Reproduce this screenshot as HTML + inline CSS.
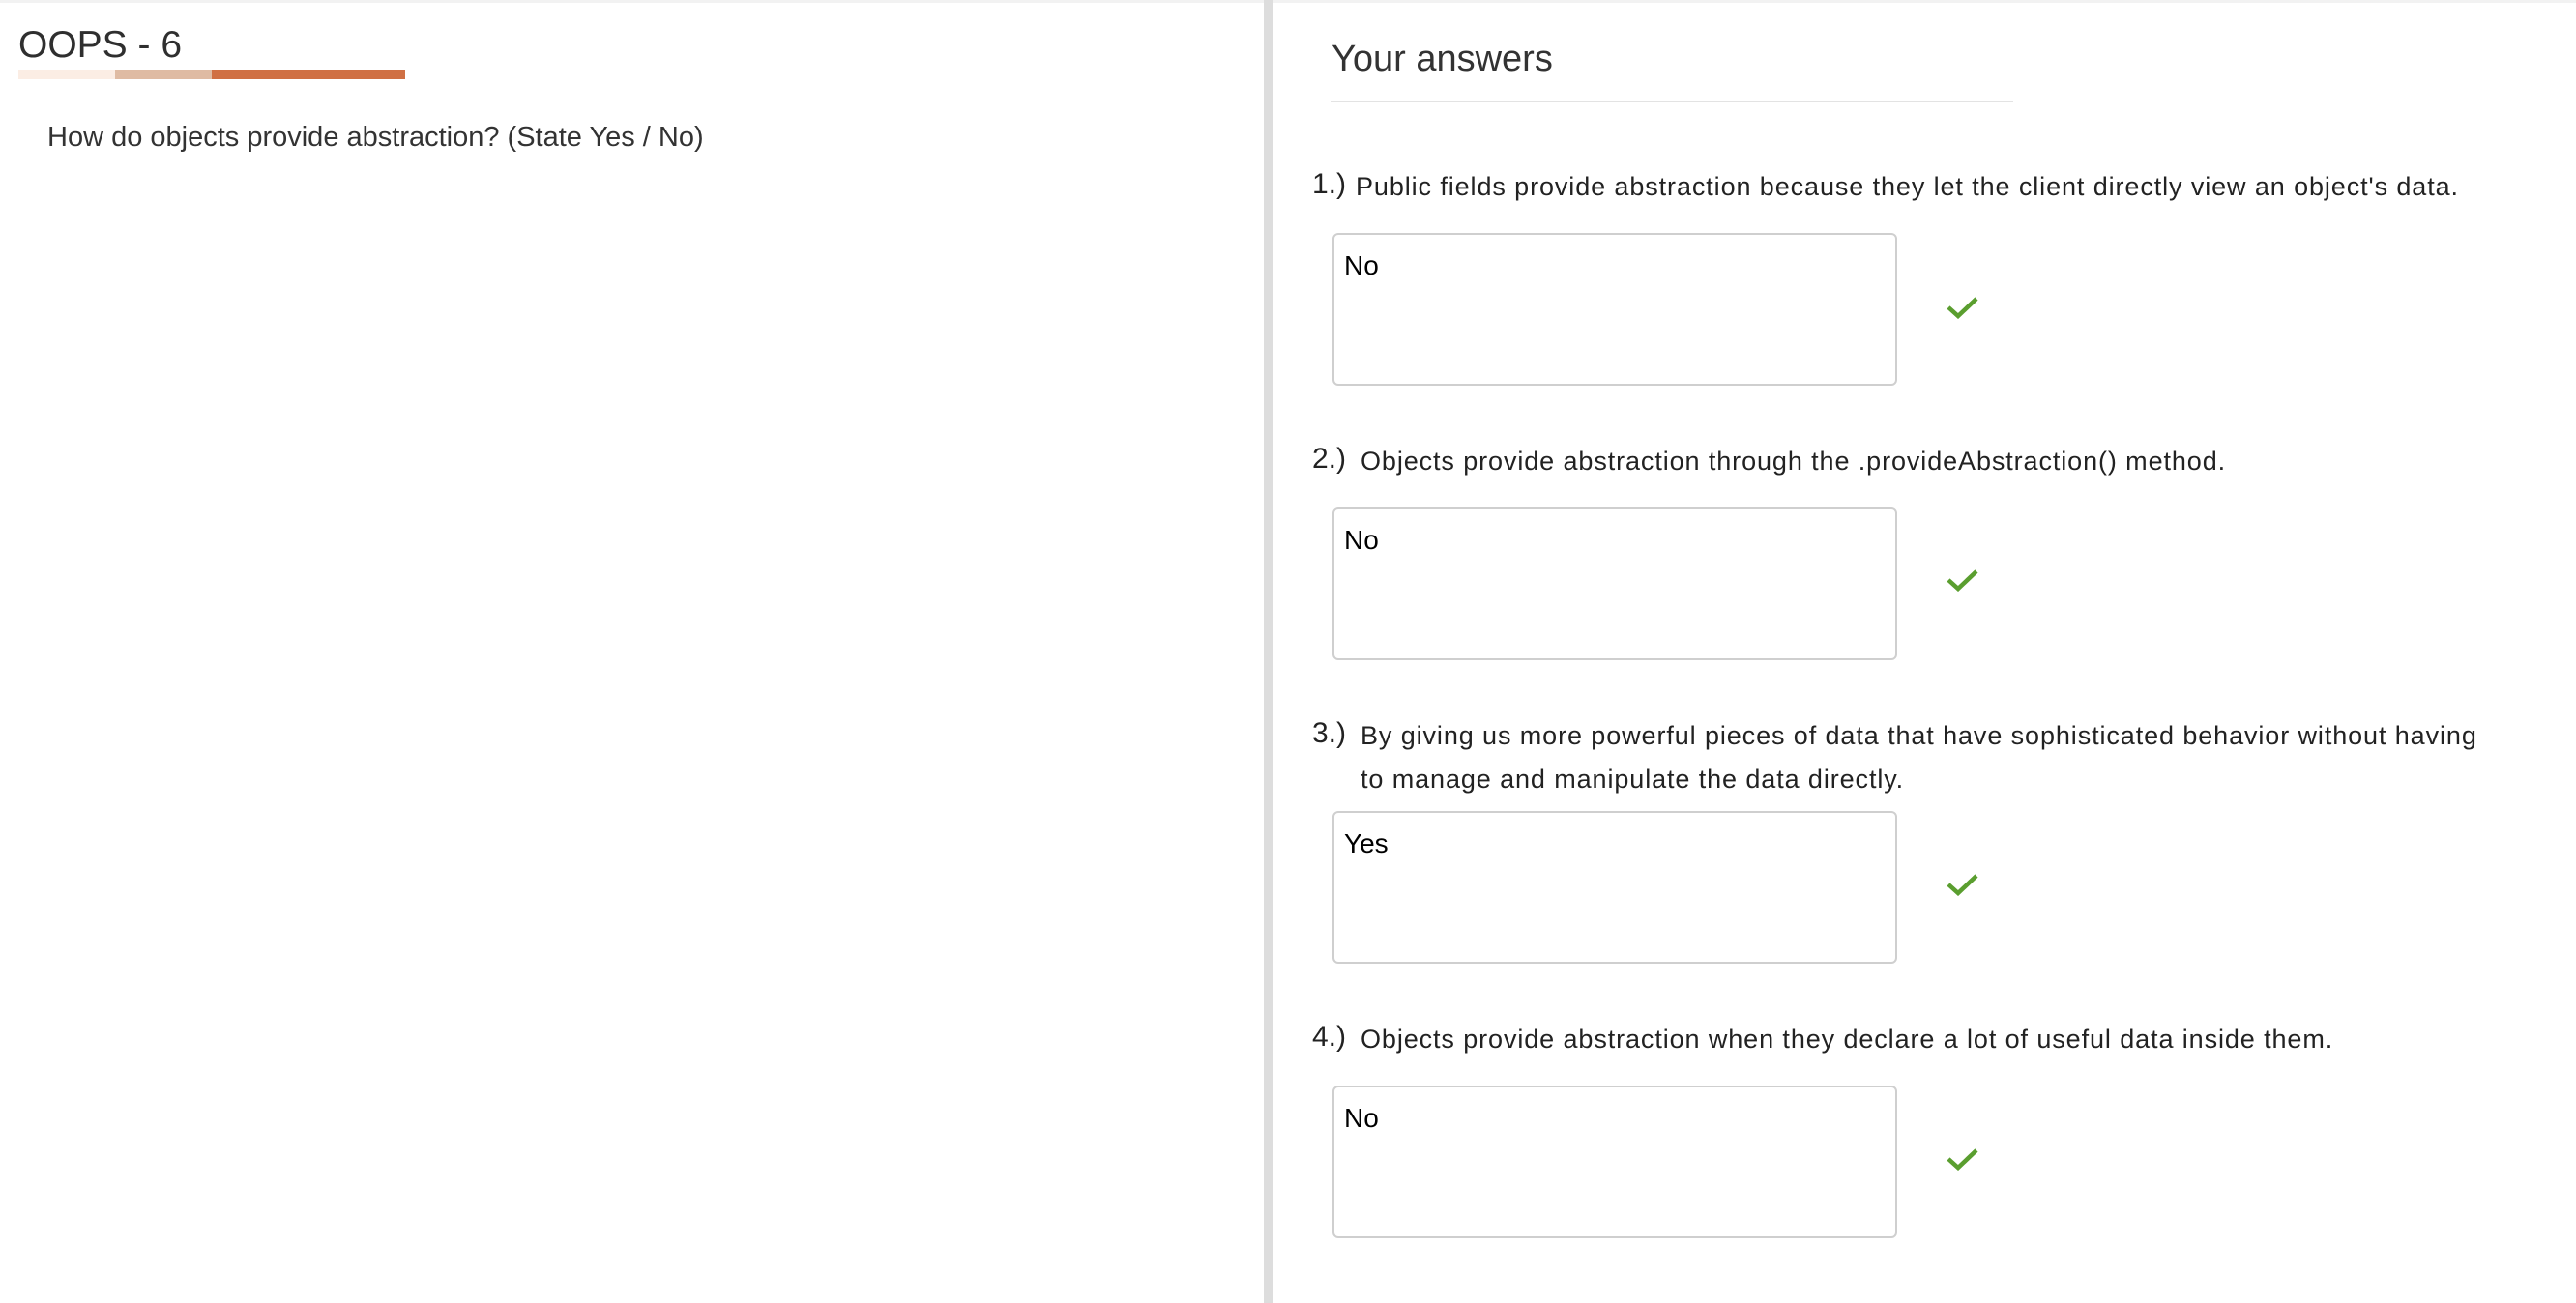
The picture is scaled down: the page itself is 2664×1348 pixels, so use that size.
<!DOCTYPE html>
<html><head><meta charset="utf-8"><style>
html,body{margin:0;padding:0;background:#fff;}
body{width:2664px;height:1348px;position:relative;overflow:hidden;font-family:"Liberation Sans",sans-serif;color:#333;}
.a{position:absolute;line-height:1;white-space:nowrap;}
.box{position:absolute;left:1378px;width:584px;height:158px;border:2px solid #cfcfcf;border-radius:6px;box-sizing:border-box;}
.box span{position:absolute;left:10px;top:18px;font-size:28px;color:#000;line-height:1;}
.chk{position:absolute;left:2013px;width:34px;height:24px;}
.q{font-size:27px;color:#222;letter-spacing:0.9px;}
.n{font-size:30px;color:#222;}
</style></head><body>
<div style="position:absolute;left:0;top:0;width:2664px;height:3px;background:#f2f2f2"></div>
<div class="a" style="left:19px;top:27px;font-size:39px;color:#2f2f2f;">OOPS - 6</div>
<div style="position:absolute;left:19px;top:72px;width:100px;height:10px;background:#fbede4"></div>
<div style="position:absolute;left:119px;top:72px;width:100px;height:10px;background:#dfbba3"></div>
<div style="position:absolute;left:219px;top:72px;width:200px;height:10px;background:#d07044"></div>
<div class="a" style="left:49px;top:128px;font-size:29px;">How do objects provide abstraction? (State Yes / No)</div>
<div style="position:absolute;left:1307px;top:0;width:10px;height:1348px;background:#dddddd"></div>
<div class="a" style="left:1377px;top:42px;font-size:38px;">Your answers</div>
<div style="position:absolute;left:1376px;top:104px;width:706px;height:2px;background:#e3e3e3"></div>

<div class="a n" style="left:1357px;top:176px;">1.)</div>
<div class="a q" style="left:1402px;top:180px;">Public fields provide abstraction because they let the client directly view an object's data.</div>
<div class="box" style="top:241px;"><span>No</span></div>

<div class="a n" style="left:1357px;top:460px;">2.)</div>
<div class="a q" style="left:1407px;top:464px;">Objects provide abstraction through the .provideAbstraction() method.</div>
<div class="box" style="top:525px;"><span>No</span></div>

<div class="a n" style="left:1357px;top:744px;">3.)</div>
<div class="a q" style="left:1407px;top:748px;">By giving us more powerful pieces of data that have sophisticated behavior without having</div>
<div class="a q" style="left:1407px;top:793px;">to manage and manipulate the data directly.</div>
<div class="box" style="top:839px;"><span>Yes</span></div>

<div class="a n" style="left:1357px;top:1058px;">4.)</div>
<div class="a q" style="left:1407px;top:1062px;">Objects provide abstraction when they declare a lot of useful data inside them.</div>
<div class="box" style="top:1123px;"><span>No</span></div>

<svg class="chk" style="top:306px" viewBox="0 0 34 24"><path d="M2 12 L12 21 L31 3" fill="none" stroke="#5a9e2f" stroke-width="4.5"/></svg>
<svg class="chk" style="top:588px" viewBox="0 0 34 24"><path d="M2 12 L12 21 L31 3" fill="none" stroke="#5a9e2f" stroke-width="4.5"/></svg>
<svg class="chk" style="top:903px" viewBox="0 0 34 24"><path d="M2 12 L12 21 L31 3" fill="none" stroke="#5a9e2f" stroke-width="4.5"/></svg>
<svg class="chk" style="top:1187px" viewBox="0 0 34 24"><path d="M2 12 L12 21 L31 3" fill="none" stroke="#5a9e2f" stroke-width="4.5"/></svg>
</body></html>
